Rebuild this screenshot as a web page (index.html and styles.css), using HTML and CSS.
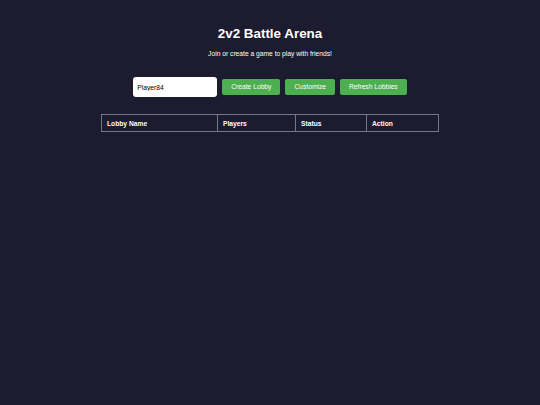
FILE: index.html
```html
<!DOCTYPE html>
<html lang="en">
<head>
<meta charset="utf-8">
<title>2v2 Battle Arena</title>
<link rel="stylesheet" href="styles.css">
</head>
<body>
<main class="page">
  <h1 class="title">2v2 Battle Arena</h1>
  <p class="subtitle">Join or create a game to play with friends!</p>
  <div class="controls">
    <input class="name-input" type="text" value="Player84">
    <button class="btn">Create Lobby</button>
    <button class="btn">Customize</button>
    <button class="btn">Refresh Lobbies</button>
  </div>
  <table class="lobbies">
    <thead>
      <tr>
        <th class="col-name">Lobby Name</th>
        <th class="col-players">Players</th>
        <th class="col-status">Status</th>
        <th class="col-action">Action</th>
      </tr>
    </thead>
    <tbody></tbody>
  </table>
</main>
</body>
</html>
```
FILE: styles.css
```css
html, body {
  margin: 0;
  padding: 0;
  background: #1c1b2f;
  color: #ffffff;
  font-family: "Liberation Sans", Arial, sans-serif;
}

.page {
  display: flex;
  flex-direction: column;
  align-items: center;
  padding-top: 26px;
}

.title {
  margin: 0;
  font-size: 13.4px;
  line-height: 16px;
  font-weight: bold;
}

.subtitle {
  margin: 8px 0 0;
  font-size: 6.7px;
  line-height: 8px;
}

.controls {
  display: flex;
  align-items: center;
  gap: 5px;
  margin-top: 19px;
}

.name-input {
  box-sizing: border-box;
  width: 84px;
  height: 20px;
  margin: 0;
  padding: 0 4px;
  border: none;
  border-radius: 3px;
  background: #ffffff;
  color: #000000;
  font-family: "Liberation Sans", Arial, sans-serif;
  font-size: 6.7px;
  outline: none;
}

.btn {
  box-sizing: border-box;
  height: 16px;
  margin: 0;
  padding: 0 9px;
  border: none;
  border-radius: 2px;
  background: #4caf50;
  color: #ffffff;
  font-family: "Liberation Sans", Arial, sans-serif;
  font-size: 6.7px;
  line-height: 16px;
}

.lobbies {
  margin-top: 17px;
  width: 337px;
  border-collapse: collapse;
  table-layout: fixed;
}

.lobbies th {
  box-sizing: border-box;
  height: 17px;
  padding: 0 5px;
  border: 1px solid #76758b;
  text-align: left;
  font-size: 6.7px;
  font-weight: bold;
  color: #ffffff;
}

.col-name { width: 116px; }
.col-players { width: 78px; }
.col-status { width: 71px; }
.col-action { width: 72px; }
```
